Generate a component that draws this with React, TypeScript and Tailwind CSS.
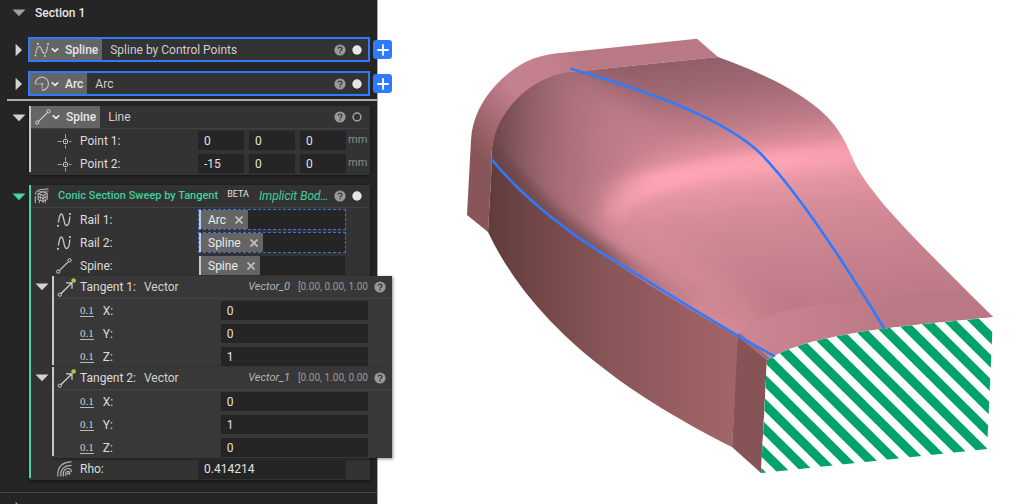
import React from "react";

const fieldClass =
  "h-[19px] min-w-0 bg-[#252525] px-[6px] text-xs text-[#e2e2e2] outline-none";

function Triangle({ open, color }: { open: boolean; color: string }) {
  return (
    <svg viewBox="0 0 14 14" className="block h-[14px] w-[14px]" fill={color} aria-hidden="true">
      <path d={open ? "M.5 3.5h13L7 10.2z" : "M3.6 .8v12.4l6.4-6.2z"} />
    </svg>
  );
}

function Toggle({ open, color = "#d2d2d2", label }: { open: boolean; color?: string; label: string }) {
  return (
    <button type="button" aria-label={label} aria-expanded={open} className="shrink-0">
      <Triangle open={open} color={color} />
    </button>
  );
}

function SplineIcon() {
  return (
    <svg viewBox="0 0 16 16" className="block h-4 w-4 shrink-0" fill="none" aria-hidden="true">
      <path d="M2.400 10.500C3 6 3.600 2 5.400 2c2.600 0 2.200 11.500 5 11.500C12.600 13.500 13.600 9 13.800 4.500" stroke="#c8c8c8" strokeWidth="1.300" />
      <g fill="#c8c8c8">
        <circle cx="2" cy="13.800" r="1.100" />
        <circle cx="13.900" cy="2" r="1.100" />
      </g>
    </svg>
  );
}

function ControlSplineIcon() {
  return (
    <svg viewBox="0 0 16 16" className="block h-4 w-4 shrink-0" fill="none" aria-hidden="true">
      <path d="M1.700 11.500C2.300 8 3.400 4.500 5.200 4.500 8 4.500 7.600 11.500 10.400 11.500 12.600 11.500 13.300 7.500 13.700 4" stroke="#c4c4c4" strokeWidth="1.200" />
      <path d="M1.700 11 3.600 2.500M10.800 13.500 13.800 3.500" stroke="#999" strokeWidth=".6" strokeDasharray="1 1" />
      <g fill="#cfcfcf">
        <circle cx="1.500" cy="13.400" r="1" />
        <circle cx="3.900" cy="1.800" r="1" />
        <circle cx="10.900" cy="13.900" r="1" />
        <circle cx="14" cy="2" r="1" />
      </g>
    </svg>
  );
}

function ArcIcon() {
  return (
    <svg viewBox="0 0 16 16" className="block h-4 w-4 shrink-0" fill="none" aria-hidden="true">
      <path d="M1.300 7.500A6.600 6.600 0 1 1 8.300 14.400" stroke="#bdbdbd" strokeWidth="1.300" />
      <path d="M.8 8H8.300V14.800" stroke="#b4b4b4" strokeWidth="1.100" strokeDasharray="1.800 .6" />
      <circle cx="8.300" cy="8" r="1" fill="#c8c8c8" />
    </svg>
  );
}

function LineIcon() {
  return (
    <svg viewBox="0 0 16 16" className="block h-4 w-4 shrink-0" fill="none" stroke="#d4d4d4" aria-hidden="true">
      <path d="M3.300 12.700 12.700 3.300" strokeWidth="1.100" />
      <circle cx="2.200" cy="13.600" r="1.600" strokeWidth="1" />
      <circle cx="13.600" cy="2.300" r="1.600" strokeWidth="1" />
    </svg>
  );
}

function PointIcon() {
  return (
    <svg viewBox="0 0 16 16" className="block h-4 w-4 shrink-0" fill="none" stroke="#9a9a9a" aria-hidden="true">
      <path d="M9.500 1v4.500M9.500 12v3.500M1.500 8.500H6M13 8.500h2.500" strokeWidth="1" />
      <rect x="7.500" y="6.500" width="4" height="4" rx="1" stroke="#dcdcdc" strokeWidth="1" />
      <circle cx="9.500" cy="8.500" r=".6" fill="#dcdcdc" stroke="none" />
    </svg>
  );
}

function VectorIcon() {
  return (
    <svg viewBox="0 0 20 20" className="block h-5 w-5 shrink-0" fill="none" stroke="#d4d4d4" aria-hidden="true">
      <path d="M4.800 16.800 15.500 6.300M10 5.800h6v6" strokeWidth="1.200" />
      <circle cx="3.700" cy="17.700" r="1.600" strokeWidth="1" />
      <circle cx="17.600" cy="3.500" r="2.300" fill="#a3cc4a" stroke="none" />
    </svg>
  );
}

function SweepIcon() {
  return (
    <svg viewBox="0 0 16 16" className="block h-4 w-4 shrink-0" fill="none" stroke="#cfcfcf" strokeWidth=".9" aria-hidden="true">
      <path d="M1.300 15V8.200M1.300 6.500C1.600 4 3 2.700 5 2 7.500 1.200 11 1.600 14.500.7" />
      <path d="M4 5.700 8.800 3.900 13.200 5.200V11.500L9 13.300 4 11.800zM9 7.300v6M4 5.700 9 7.300 13.200 5.200M4 8.800 9 10.300 13.200 8.400" />
      <path d="M6.400 6.600v5.600M11 6.400v5.800M3.300 3.800C6 3.300 11 3.700 14.500 3" strokeWidth=".6" />
      <path d="M5.500 12.500v2.800M9 13.500v2M11.500 12.500v2.800" strokeDasharray="1.200 .6" />
    </svg>
  );
}

function RhoIcon() {
  return (
    <svg viewBox="0 0 16 16" className="block h-4 w-4 shrink-0" fill="none" stroke="#b4b4b4" strokeWidth="1.200" aria-hidden="true">
      <path d="M1.900 15.500C.9 6.500 6 1 15.500.9" />
      <path d="M4.900 15.500C3.900 8.500 8 4.400 15.500 4.300" />
      <path d="M7.500 15.500C6.200 10.500 9 7.500 12 7.500c2 0 3.400 1.500 3.400 3.500" />
      <path d="M10 15c-1.200-3 .4-4.700 2-4.700 2 0 2.500 2.200 1 3.100" />
      <circle cx="12" cy="12.600" r=".5" />
    </svg>
  );
}

function Chevron() {
  return (
    <svg viewBox="0 0 8 8" className="block h-2 w-2 shrink-0" fill="none" aria-hidden="true">
      <path d="M.8 2.400 4 5.400 7.200 2.400" stroke="#ededed" strokeWidth="1.600" />
    </svg>
  );
}

function Help() {
  return (
    <button type="button" aria-label="Help" className="shrink-0">
      <svg viewBox="0 0 12 12" className="block h-3 w-3" fill="none" aria-hidden="true">
        <circle cx="6" cy="6" r="5.600" fill="#989898" />
        <path d="M4.200 4.800c0-2.400 3.700-2.300 3.700-.2C7.900 6 6.100 5.900 6.100 7.500M6.100 8.300v1.200" stroke="#303030" strokeWidth="1.200" />
      </svg>
    </button>
  );
}

function Visibility({ on }: { on: boolean }) {
  return (
    <button type="button" aria-label="Visibility" aria-pressed={on} className="shrink-0">
      <svg viewBox="0 0 10 10" className="block h-[10px] w-[10px]" aria-hidden="true">
        {on ? (
          <circle cx="5" cy="5" r="4.700" fill="#e6e6e6" />
        ) : (
          <circle cx="5" cy="5" r="3.900" fill="none" stroke="#a2a2a2" strokeWidth="1.500" />
        )}
      </svg>
    </button>
  );
}

function NameTag({ icon, name }: { icon: React.ReactNode; name: string }) {
  return (
    <button type="button" className="flex h-full items-center bg-[#656565] pr-1 pl-1 font-medium text-[#e6e6e6]">
      {icon}
      <span className="ml-px">
        <Chevron />
      </span>
      <span className="ml-[6px]">{name}</span>
    </button>
  );
}

function LinkedBlock({ icon, name, type }: { icon: React.ReactNode; name: string; type: string }) {
  return (
    <div className="flex items-center pl-3">
      <Toggle open={false} label={`Expand ${name}`} />
      <div className="ml-[2px] flex h-[25px] flex-1 items-center border-2 border-[#2f7bff] bg-[#333]">
        <NameTag icon={icon} name={name} />
        <span className="ml-2 flex-1 text-[#cfcfcf]">{type}</span>
        <div className="flex items-center gap-[6px] pr-[6px]">
          <Help />
          <Visibility on />
        </div>
      </div>
      <button
        type="button"
        aria-label={`Add to ${name}`}
        className="-mr-[15px] ml-[3px] flex h-[19px] w-[19px] items-center justify-center rounded-[3px] bg-[#2f7bff]"
      >
        <svg viewBox="0 0 12 12" className="h-3 w-3" aria-hidden="true">
          <path d="M6 .3v11.400M.3 6h11.400" stroke="#fff" strokeWidth="1.800" />
        </svg>
      </button>
    </div>
  );
}

function PointRow({ label, values }: { label: string; values: string[] }) {
  return (
    <div className="flex h-[23px] items-center pl-[25px]">
      <PointIcon />
      <span className="ml-2 w-[118px] text-[#dcdcdc]">{label}:</span>
      <div className="flex gap-[5px]">
        {values.map((value, i) => (
          <input key={i} aria-label={`${label} ${"XYZ"[i]}`} defaultValue={value} className={`w-[46px] ${fieldClass}`} />
        ))}
      </div>
      <span className="ml-[2px] text-[11px] text-[#8c8c8c]">mm</span>
    </div>
  );
}

function Chip({ name }: { name: string }) {
  return (
    <span className="flex h-[19px] items-center gap-2 border-l-2 border-[#c8c8c8] bg-[#656565] pr-1 pl-[7px] text-[#ececec]">
      {name}
      <button type="button" aria-label={`Remove ${name}`}>
        <svg viewBox="0 0 10 10" className="block h-[10px] w-[10px]" aria-hidden="true">
          <path d="m1.500 1.500 7 7M8.500 1.500l-7 7" stroke="#c6c6c6" strokeWidth="1.700" />
        </svg>
      </button>
    </span>
  );
}

function ReferenceRow({ icon, label, value, linked }: { icon: React.ReactNode; label: string; value: string; linked?: boolean }) {
  return (
    <div className="flex h-[23px] items-center pl-[25px]">
      {icon}
      <span className="ml-2 w-[118px] text-[#dcdcdc]">{label}:</span>
      <div
        className={`flex h-[21px] w-[148px] items-center border border-dashed bg-[#252525] ${
          linked ? "border-[#3a73e0]" : "border-transparent bg-clip-padding"
        }`}
      >
        <Chip name={value} />
      </div>
    </div>
  );
}

function VectorGroup({ label, name, preview, values }: { label: string; name: string; preview: string; values: string[] }) {
  return (
    <section className="-mr-[22px] flex">
      <div className="w-[21px] shrink-0 pt-1 pl-1">
        <Toggle open label={`Collapse ${label}`} />
      </div>
      <div className="flex min-w-0 flex-1 bg-[#383838] shadow-[1px_1px_3px_rgba(0,0,0,0.45)]">
        <div className="mb-[2px] w-[2px] bg-[#c8c8c8]" />
        <div className="min-w-0 flex-1">
          <header className="flex h-[23px] items-center border-b border-[#454545] pr-[6px] pl-[2px]">
            <VectorIcon />
            <span className="ml-1 whitespace-nowrap text-[#dcdcdc]">{label}:</span>
            <span className="ml-2 flex-1 text-[#d0d0d0]">Vector</span>
            <span className="text-[11px] text-[#b4b4b4] italic">{name}</span>
            <span className="ml-2 text-[10px] whitespace-nowrap text-[#9a9a9a]">{preview}</span>
            <span className="ml-[6px] flex">
              <Help />
            </span>
          </header>
          <div className="-mb-px">
            {values.map((value, i) => (
              <label key={i} className="flex h-[23px] items-center pr-6 pl-[26px]">
                <span className="border-b border-[#b8b8b8] font-['Liberation_Serif',serif] text-[11px] leading-[11px] text-[#d0d0d0]">
                  0.1
                </span>
                <span className="ml-[9px] w-[118px] text-[#dcdcdc]">{"XYZ"[i]}:</span>
                <input defaultValue={value} className={`flex-1 ${fieldClass}`} />
              </label>
            ))}
          </div>
        </div>
      </div>
    </section>
  );
}

const stripes = Array.from({ length: 17 }, (_, i) => -328 + (i - 13) * 24.3);

const BODY_TOP =
  "M718 57C752 69 790 86 815 106C838 124 845 141 852 157C858 172 868 185 885 206C915 240 950 274 993 317C930 323 892 327 860 332C815 340 793 345 767 360L737 336C650 288 540 220 492 160C489 112 535 75 571 72z";
const LEFT_RAIL = "M492 160C528 203 570 233 605 255C660 288 715 324 774 356";

function Model() {
  return (
    <svg
      viewBox="377 0 647 504"
      preserveAspectRatio="xMinYMin meet"
      className="block h-full w-full"
      role="img"
      aria-label="Swept conic body with sectioned end"
    >
      <defs>
        <linearGradient id="surface" gradientUnits="userSpaceOnUse" x1="700" y1="60" x2="730" y2="310">
          <stop offset="0" stopColor="#925f69" />
          <stop offset=".12" stopColor="#a06973" />
          <stop offset=".27" stopColor="#bd7b87" />
          <stop offset=".37" stopColor="#e08f9c" />
          <stop offset=".44" stopColor="#fca3b2" />
          <stop offset=".53" stopColor="#e595a2" />
          <stop offset=".64" stopColor="#d58b98" />
          <stop offset=".8" stopColor="#ca8390" />
          <stop offset="1" stopColor="#be7b87" />
        </linearGradient>
        <linearGradient id="shoulder" gradientUnits="userSpaceOnUse" x1="492" y1="140" x2="680" y2="150">
          <stop offset="0" stopColor="#6c4648" />
          <stop offset=".18" stopColor="#8f5e65" />
          <stop offset=".4" stopColor="#ab707b" />
          <stop offset=".65" stopColor="#bd7b87" />
          <stop offset="1" stopColor="#cb8491" stopOpacity=".4" />
        </linearGradient>
        <linearGradient id="ridge" gradientUnits="userSpaceOnUse" x1="600" y1="0" x2="850" y2="0">
          <stop offset="0" stopColor="#e895a2" stopOpacity=".7" />
          <stop offset=".2" stopColor="#ffa6b6" />
          <stop offset=".7" stopColor="#ffa6b6" />
          <stop offset="1" stopColor="#f59dab" />
        </linearGradient>
        <linearGradient id="railShade" gradientUnits="userSpaceOnUse" x1="492" y1="160" x2="690" y2="300">
          <stop offset="0" stopColor="#6a4345" />
          <stop offset=".6" stopColor="#85555a" />
          <stop offset="1" stopColor="#b97683" stopOpacity="0" />
        </linearGradient>
        <linearGradient id="wall" gradientUnits="userSpaceOnUse" x1="490" y1="0" x2="737" y2="0">
          <stop offset="0" stopColor="#603c3c" />
          <stop offset=".2" stopColor="#734747" />
          <stop offset=".5" stopColor="#8a5659" />
          <stop offset="1" stopColor="#a36569" />
        </linearGradient>
        <linearGradient id="lip" gradientUnits="userSpaceOnUse" x1="475" y1="150" x2="580" y2="60">
          <stop offset="0" stopColor="#885659" />
          <stop offset=".25" stopColor="#a76b74" />
          <stop offset=".5" stopColor="#c5808d" />
          <stop offset=".8" stopColor="#c5808d" />
          <stop offset="1" stopColor="#b97885" />
        </linearGradient>
        <linearGradient id="endLip" gradientUnits="userSpaceOnUse" x1="740" y1="0" x2="900" y2="0">
          <stop offset="0" stopColor="#cd8693" />
          <stop offset="1" stopColor="#ba7784" />
        </linearGradient>
        <clipPath id="topClip">
          <path d={BODY_TOP} />
        </clipPath>
        <clipPath id="cutClip">
          <path d="M993 317.500C930 323 892 327 860 332C815 340 793 345 767 360L761 473L987 449z" />
        </clipPath>
        <filter id="soft" x="-30%" y="-30%" width="160%" height="160%">
          <feGaussianBlur stdDeviation="12" />
        </filter>
        <filter id="fine" x="-30%" y="-30%" width="160%" height="160%">
          <feGaussianBlur stdDeviation="6" />
        </filter>
      </defs>

      <path
        d="M467 215L471 140C472 119 482 100 495 86C518 62 535 55 563 52.700L697 38.700L718 57L571 72C530 82 488 120 492 160L488 232z"
        fill="url(#lip)"
      />
      <path
        d="M492 160C528 203 570 233 605 255C660 288 700 316 739 337L732 447C655 408 540 342 488 232z"
        fill="url(#wall)"
      />
      <path d="M738 335L767 360L761 473L732 447z" fill="#865457" />

      <g clipPath="url(#topClip)">
        <rect x="480" y="40" width="530" height="330" fill="url(#surface)" />
        <path
          d="M440 20L545 20C570 85 640 100 690 148C655 158 622 178 600 206L606 255L560 300L430 200z"
          fill="url(#shoulder)"
          filter="url(#soft)"
        />
        <path d="M612 211C640 188 690 169 760 161L850 153" fill="none" stroke="url(#ridge)" strokeWidth="12" strokeLinecap="round" filter="url(#fine)" />
        <path d="M650 240C690 266 725 302 760 335" fill="none" stroke="#d98d99" strokeOpacity=".7" strokeWidth="30" filter="url(#soft)" />
        <path d="M480 140C528 205 570 235 605 257C640 278 665 292 690 307" fill="none" stroke="url(#railShade)" strokeWidth="22" filter="url(#fine)" />
        <path d="M690 303L745 335" fill="none" stroke="#e0919c" strokeWidth="8" filter="url(#fine)" />
        <path d="M738 334C765 305 850 299 964 291L1000 320L880 345L767 362z" fill="url(#endLip)" />
        <path d="M738 335L768 360" stroke="#8c595e" strokeWidth="5" opacity=".6" />
      </g>

      <g clipPath="url(#cutClip)">
        <rect x="755" y="310" width="245" height="170" fill="#fff" />
        {stripes.map((c) => (
          <path key={c} d={`M740 ${0.99 * 740 + c}L1010 ${0.99 * 1010 + c}`} stroke="#02a36b" strokeWidth="9.200" />
        ))}
      </g>

      <g fill="none" stroke="#2f7bff" strokeWidth="2.600" strokeLinecap="round">
        <path d={LEFT_RAIL} />
        <path d="M571.500 69C635 87 720 115 760 153C795 188 840 256 884 328" />
      </g>
    </svg>
  );
}

export default function App() {
  return (
    <div className="flex h-screen overflow-hidden bg-white font-[Roboto,sans-serif] text-xs">
      <aside className="relative z-10 w-[378px] shrink-0 border-r border-[#a8a8a8] bg-[#252525]">
        <header className="flex h-[26px] items-center gap-[9px] pl-3">
          <Toggle open color="#a0a0a0" label="Collapse section" />
          <h2 className="font-medium text-[#e8e8e8]">Section 1</h2>
        </header>

        <div className="mt-[11px] flex flex-col gap-[9px]">
          <LinkedBlock icon={<ControlSplineIcon />} name="Spline" type="Spline by Control Points" />
          <LinkedBlock icon={<ArcIcon />} name="Arc" type="Arc" />
        </div>

        <hr className="mt-[3px] ml-[7px] h-[2px] border-0 bg-[#b0acb0]" />

        <section className="mt-[5px] flex pr-[7px] pl-3">
          <div className="pt-[5px]">
            <Toggle open label="Collapse Spine" />
          </div>
          <div className="ml-[3px] flex min-w-0 flex-1 bg-[#333] shadow-[0_1px_3px_rgba(0,0,0,0.5)]">
            <div className="mb-[3px] w-[2px] bg-[#c8c8c8]" />
            <div className="min-w-0 flex-1">
              <header className="flex h-[23px] items-center border-b border-[#434343]">
                <NameTag icon={<LineIcon />} name="Spine" />
                <span className="ml-2 flex-1 text-[#cfcfcf]">Line</span>
                <div className="flex items-center gap-[6px] pr-2">
                  <Help />
                  <Visibility on={false} />
                </div>
              </header>
              <PointRow label="Point 1" values={["0", "0", "0"]} />
              <PointRow label="Point 2" values={["-15", "0", "0"]} />
            </div>
          </div>
        </section>

        <section className="mt-[10px] flex pr-[7px] pl-3">
          <div className="pt-[5px]">
            <Toggle open color="#45d6a2" label="Collapse Conic Section Sweep by Tangent" />
          </div>
          <div className="ml-[3px] flex min-w-0 flex-1 bg-[#333] shadow-[0_1px_3px_rgba(0,0,0,0.5)]">
            <div className="mb-[2px] w-[2px] bg-[#45d6a2]" />
            <div className="min-w-0 flex-1">
              <header className="flex h-[23px] items-center border-b border-[#434343] pr-2 pl-[3px]">
                <SweepIcon />
                <h3 className="ml-2 text-[11px] font-medium whitespace-nowrap text-[#3fcf9b]">
                  Conic Section Sweep by Tangent
                </h3>
                <span className="mb-1 ml-[9px] text-[9px] text-[#e0e0e0]">BETA</span>
                <span className="ml-[10px] flex-1 whitespace-nowrap text-[#3fcf9b] italic">Implicit Bod…</span>
                <div className="flex items-center gap-[6px]">
                  <Help />
                  <Visibility on />
                </div>
              </header>
              <ReferenceRow icon={<SplineIcon />} label="Rail 1" value="Arc" linked />
              <ReferenceRow icon={<SplineIcon />} label="Rail 2" value="Spline" linked />
              <ReferenceRow icon={<LineIcon />} label="Spine" value="Spine" />
              <div className="-mt-px">
                <VectorGroup label="Tangent 1" name="Vector_0" preview="[0.00, 0.00, 1.00" values={["0", "0", "1"]} />
                <VectorGroup label="Tangent 2" name="Vector_1" preview="[0.00, 1.00, 0.00" values={["0", "1", "0"]} />
              </div>
              <label className="flex h-[22px] items-center pl-[25px]">
                <RhoIcon />
                <span className="ml-2 w-[118px] text-[#dcdcdc]">Rho:</span>
                <input defaultValue="0.414214" className={`w-[148px] ${fieldClass}`} />
              </label>
            </div>
          </div>
        </section>

        <div className="mt-3 border-t border-[#434343] pt-2 pl-3">
          <Toggle open={false} color="#a0a0a0" label="Expand next section" />
        </div>
      </aside>

      <main className="-ml-px min-w-0 flex-1">
        <Model />
      </main>
    </div>
  );
}
